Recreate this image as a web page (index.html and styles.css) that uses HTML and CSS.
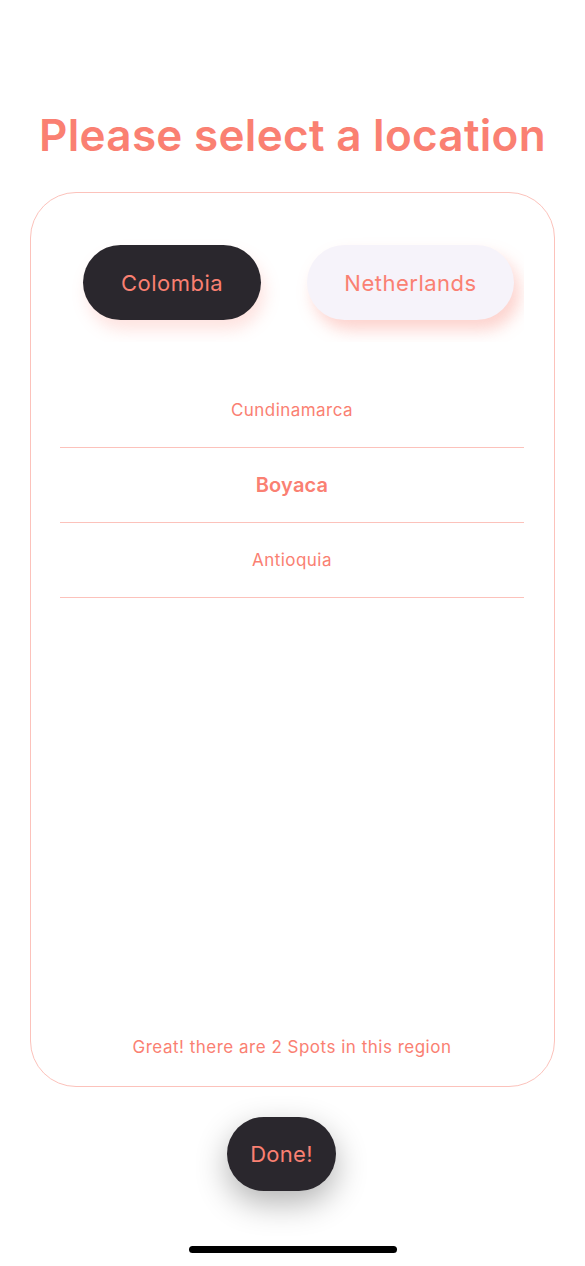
FILE: index.html
```html
<!DOCTYPE html>
<html>
<head>
<meta charset="utf-8">
<link rel="stylesheet" href="styles.css">
</head>
<body>
<div class="screen">
  <h1 class="title">Please select a location</h1>
  <div class="card">
    <div class="tabs">
      <div class="tab tab-active">Colombia</div>
      <div class="tab tab-light">Netherlands</div>
    </div>
    <ul class="list">
      <li class="row">Cundinamarca</li>
      <li class="row row-selected">Boyaca</li>
      <li class="row">Antioquia</li>
    </ul>
    <div class="note">Great! there are 2 Spots in this region</div>
  </div>
  <div class="done">Done!</div>
  <div class="home-indicator"></div>
</div>
</body>
</html>
```

FILE: styles.css
```css
html, body {
  margin: 0;
  padding: 0;
  background: #ffffff;
}
body {
  font-family: Inter, "Noto Sans", sans-serif;
  color: #FA8072;
}
.screen {
  width: 585px;
  height: 1266px;
  display: flex;
  flex-direction: column;
  align-items: center;
  box-sizing: border-box;
  padding-top: 105px;
}
.title {
  margin: 0;
  font-size: 44px;
  font-weight: 600;
  line-height: 60px;
  letter-spacing: 0.3px;
  color: #FA8072;
}
.card {
  margin-top: 27px;
  width: 525px;
  height: 895px;
  box-sizing: border-box;
  border: 1px solid #FCC2BB;
  border-radius: 46px;
  padding: 0 30px 0 29px;
  display: flex;
  flex-direction: column;
}
.tabs {
  margin-top: 32px;
  padding: 20px 0 22px 23px;
  display: flex;
  gap: 46px;
  overflow: hidden;
}
.tab {
  height: 75px;
  border-radius: 38px;
  display: flex;
  align-items: center;
  justify-content: center;
  font-size: 22px;
  letter-spacing: 0.5px;
  color: #FA8072;
}
.tab-active {
  width: 178px;
  background: #2A272D;
  box-shadow: 4px 10px 16px rgba(250, 128, 114, 0.22);
}
.tab-light {
  width: 207px;
  background: #F6F3FA;
  box-shadow: 6px 10px 16px rgba(250, 128, 114, 0.35);
}
.list {
  list-style: none;
  margin: 31px 0 0 0;
  padding: 0;
}
.row {
  height: 75px;
  box-sizing: border-box;
  border-bottom: 1px solid #FCC2BB;
  display: flex;
  align-items: center;
  justify-content: center;
  font-size: 17px;
  letter-spacing: 0.45px;
  color: #FA8072;
}
.row-selected {
  font-size: 20px;
  font-weight: 600;
  letter-spacing: 0.2px;
}
.note {
  margin-top: auto;
  margin-bottom: 29px;
  text-align: center;
  font-size: 17px;
  line-height: 20px;
  letter-spacing: 0.5px;
  color: #FA8072;
}
.done {
  margin-top: 30px;
  margin-right: 22px;
  width: 109px;
  height: 74px;
  border-radius: 37px;
  background: #2A272D;
  color: #FA8072;
  font-size: 22px;
  letter-spacing: 0.3px;
  display: flex;
  align-items: center;
  justify-content: center;
  box-shadow: 0 12px 32px rgba(0, 0, 0, 0.3);
}
.home-indicator {
  margin-top: 55px;
  width: 208px;
  height: 7px;
  border-radius: 4px;
  background: #000000;
}
```
